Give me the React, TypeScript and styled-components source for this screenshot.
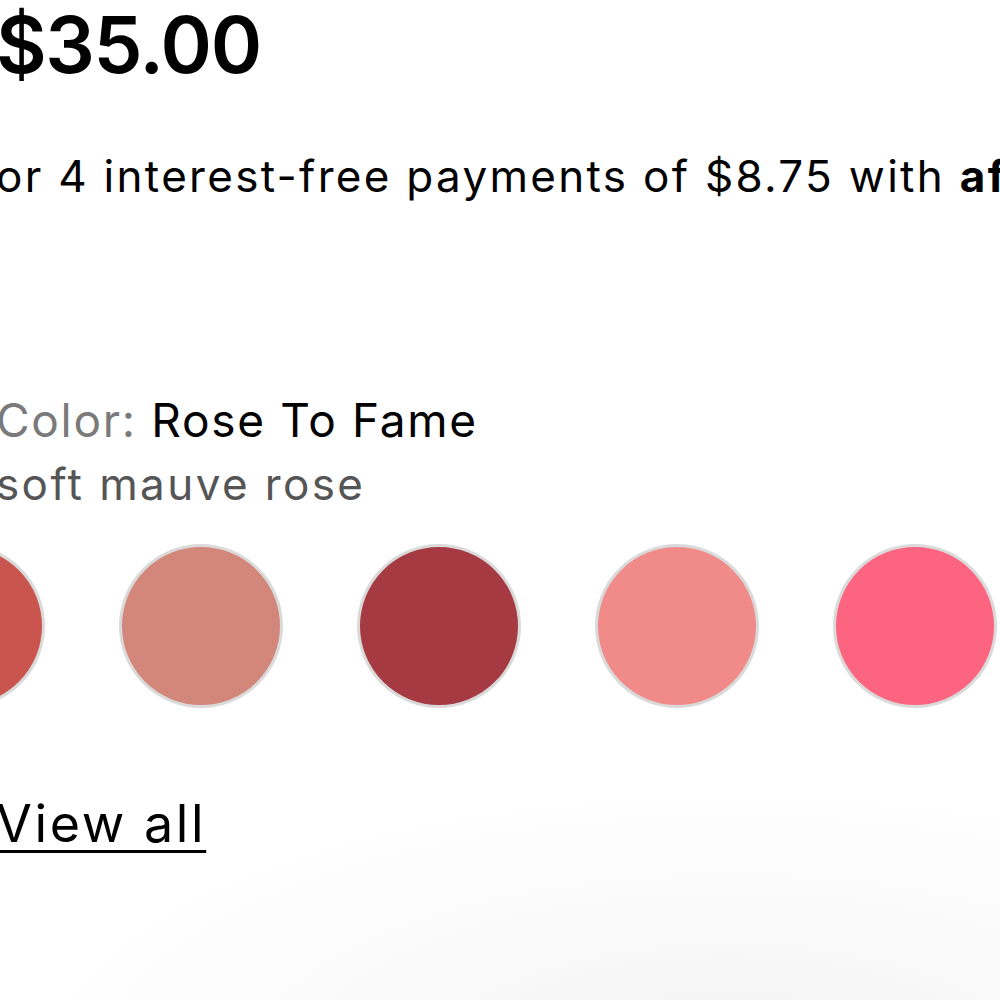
import React from "react";
import styled, { createGlobalStyle } from "styled-components";

const swatches = [
  { name: "Red Carpet", color: "#c9554e" },
  { name: "Rose To Fame", color: "#d2877a" },
  { name: "Bordeaux", color: "#a53a43" },
  { name: "Peach Kiss", color: "#f08b89" },
  { name: "Hot Pink", color: "#fd6480" },
];

const App = () => {
  return (
    <>
      <GlobalStyle />
      <Page>
        <Price>$35.00</Price>
        <Installments>
          or 4 interest-free payments of $8.75 with <strong>afterpay</strong>
        </Installments>
        <ShadeInfo>
          <ShadeName>
            <Label>Color:</Label> Rose To Fame
          </ShadeName>
          <ShadeDescription>soft mauve rose</ShadeDescription>
        </ShadeInfo>
        <SwatchRow>
          {swatches.map((s) => (
            <Swatch key={s.name} $color={s.color} aria-label={s.name} />
          ))}
        </SwatchRow>
        <ViewAll href="#">View all</ViewAll>
      </Page>
    </>
  );
};

export default App;

const GlobalStyle = createGlobalStyle`
  html, body {
    margin: 0;
    padding: 0;
    width: 1000px;
    height: 1000px;
    overflow: hidden;
    background: radial-gradient(ellipse 720px 280px at 730px 1060px, #f1f1f1 0%, #f9f9f9 45%, #ffffff 100%);
    font-family: Inter, "Open Sans", sans-serif;
    color: #000;
  }
`;

const Page = styled.div`
  display: flex;
  flex-direction: column;
  margin-left: -4px;
  white-space: nowrap;
`;

const Price = styled.div`
  font-size: 78px;
  font-weight: 600;
  line-height: 1;
  margin-top: 6px;
  letter-spacing: -1.4px;
`;

const Installments = styled.div`
  font-size: 44px;
  line-height: 1;
  margin-top: 70px;
  letter-spacing: 2.3px;

  strong {
    font-weight: 700;
  }
`;

const ShadeInfo = styled.div`
  display: flex;
  flex-direction: column;
  margin-top: 199px;
  gap: 19px;
`;

const ShadeName = styled.div`
  font-size: 46px;
  line-height: 1;
  letter-spacing: 1.7px;
`;

const Label = styled.span`
  color: #7a7a7a;
`;

const ShadeDescription = styled.div`
  font-size: 44px;
  line-height: 1;
  color: #555;
  letter-spacing: 2.4px;
`;

const SwatchRow = styled.div`
  display: flex;
  gap: 74px;
  margin-top: 38px;
  margin-left: -115px;
`;

const Swatch = styled.button<{ $color: string }>`
  flex: none;
  width: 164px;
  height: 164px;
  border-radius: 50%;
  border: 3px solid #dadada;
  background: ${(p) => p.$color};
  padding: 0;
  cursor: pointer;
`;

const ViewAll = styled.a`
  align-self: flex-start;
  margin-top: 90px;
  font-size: 52px;
  line-height: 1;
  color: #000;
  letter-spacing: 2.6px;
  text-decoration: underline;
  text-decoration-thickness: 3px;
  text-underline-offset: 8px;
`;
